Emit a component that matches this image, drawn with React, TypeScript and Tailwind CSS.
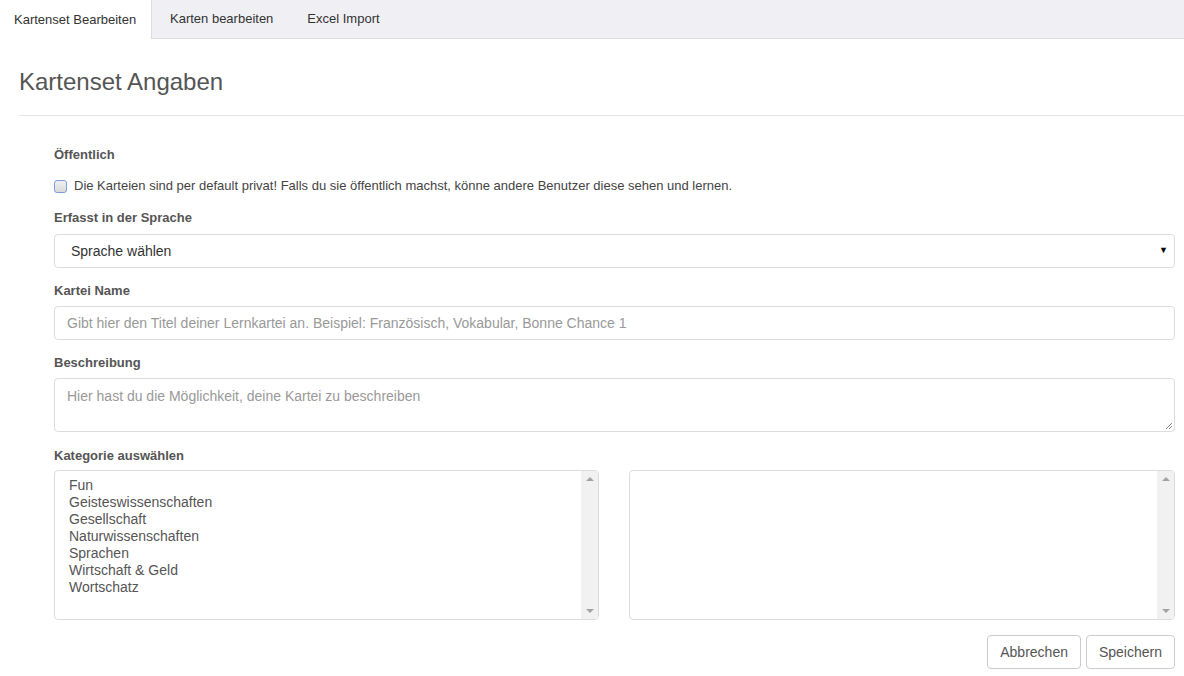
import React from 'react';

const tabs = ['Kartenset Bearbeiten', 'Karten bearbeiten', 'Excel Import'];
const categories = [
  'Fun',
  'Geisteswissenschaften',
  'Gesellschaft',
  'Naturwissenschaften',
  'Sprachen',
  'Wirtschaft & Geld',
  'Wortschatz',
];

const FakeScrollbar = () => (
  <div className="flex w-[17px] flex-col items-center justify-between bg-[#f1f1f1] py-[6px]">
    <div className="h-0 w-0 border-x-[4px] border-b-[4px] border-x-transparent border-b-[#a3a3a3]" />
    <div className="h-0 w-0 border-x-[4px] border-t-[4px] border-x-transparent border-t-[#a3a3a3]" />
  </div>
);

const Label = ({ children, className = 'mb-[7px]' }: { children: React.ReactNode; className?: string }) => (
  <div className={`${className} text-[13px] font-bold leading-[18px] text-[#555]`}>{children}</div>
);

export default function App() {
  return (
    <div className="min-h-[676px] bg-white text-[14px] text-[#333]" style={{ fontFamily: '"Liberation Sans", Arial, sans-serif' }}>
      <div className="flex h-[39px] border-b border-[#dddde0] bg-[#f0f0f4]">
        {tabs.map((tab, i) => (
          <div
            key={tab}
            className={
              i === 0
                ? 'relative -mb-px flex h-[39px] w-[152px] items-center border-r border-[#dddde0] bg-white px-[14px] text-[13px] text-[#333]'
                : i === 1
                  ? 'flex h-[38px] items-center pr-[17px] pl-[18px] text-[13px] text-[#333]'
                  : 'flex h-[38px] items-center px-[17px] text-[13px] text-[#333]'
            }
          >
            {tab}
          </div>
        ))}
      </div>

      <div className="pl-[19px]">
        <h1 className="pt-[28px] pb-[18px] text-[24px] leading-[30px] text-[#555]">Kartenset Angaben</h1>
        <div className="border-t border-[#e5e5e5]" />
      </div>

      <div className="ml-[54px] mr-[9px] pt-[30px]">
        <Label className="mb-[13px]">Öffentlich</Label>
        <div className="mb-[14px] flex h-[18px] items-center gap-[7px] text-[13px] leading-[18px] text-[#444]">
          <div className="h-[13px] w-[13px] rounded-[3px] border border-[#7b9de0] bg-gradient-to-b from-[#f0f0f0] to-[#dadada]" />
          <span>Die Karteien sind per default privat! Falls du sie öffentlich machst, könne andere Benutzer diese sehen und lernen.</span>
        </div>

        <Label>Erfasst in der Sprache</Label>
        <div className="mb-[14px] flex h-[34px] items-center justify-between rounded-[4px] border border-[#dcdcdc] pr-[6px] pl-[16px]">
          <span>Sprache wählen</span>
          <span className="text-[9px] text-black">▼</span>
        </div>

        <Label className="mb-[6px]">Kartei Name</Label>
        <div className="mb-[14px] flex h-[34px] items-center rounded-[4px] border border-[#dcdcdc] px-[12px] text-[#999]">
          Gibt hier den Titel deiner Lernkartei an. Beispiel: Französisch, Vokabular, Bonne Chance 1
        </div>

        <Label className="mb-[6px]">Beschreibung</Label>
        <div className="relative mb-[15px] h-[54px] rounded-[4px] border border-[#dcdcdc] px-[12px] pt-[7px] text-[#999]">
          Hier hast du die Möglichkeit, deine Kartei zu beschreiben
          <svg className="absolute right-[1px] bottom-[1px]" width="8" height="8" viewBox="0 0 8 8">
            <path d="M7 1 L1 7 M7 4 L4 7" stroke="#888" strokeWidth="1" />
          </svg>
        </div>

        <Label className="mb-[5px]">Kategorie auswählen</Label>
        <div className="flex gap-[30px]">
          <div className="flex h-[150px] w-[545px] overflow-hidden rounded-[4px] border border-[#dcdcdc]">
            <div className="flex-1 pt-[6px] pl-[14px] leading-[17px] text-[#555]">
              {categories.map((c) => (
                <div key={c}>{c}</div>
              ))}
            </div>
            <FakeScrollbar />
          </div>
          <div className="flex h-[150px] flex-1 overflow-hidden rounded-[4px] border border-[#dcdcdc]">
            <div className="flex-1" />
            <FakeScrollbar />
          </div>
        </div>

        <div className="mt-[15px] flex justify-end gap-[5px]">
          <button className="h-[34px] rounded-[4px] border border-[#ccc] bg-white px-[12px] text-[14px] text-[#555]">Abbrechen</button>
          <button className="h-[34px] rounded-[4px] border border-[#ccc] bg-white px-[12px] text-[14px] text-[#555]">Speichern</button>
        </div>
      </div>
    </div>
  );
}
